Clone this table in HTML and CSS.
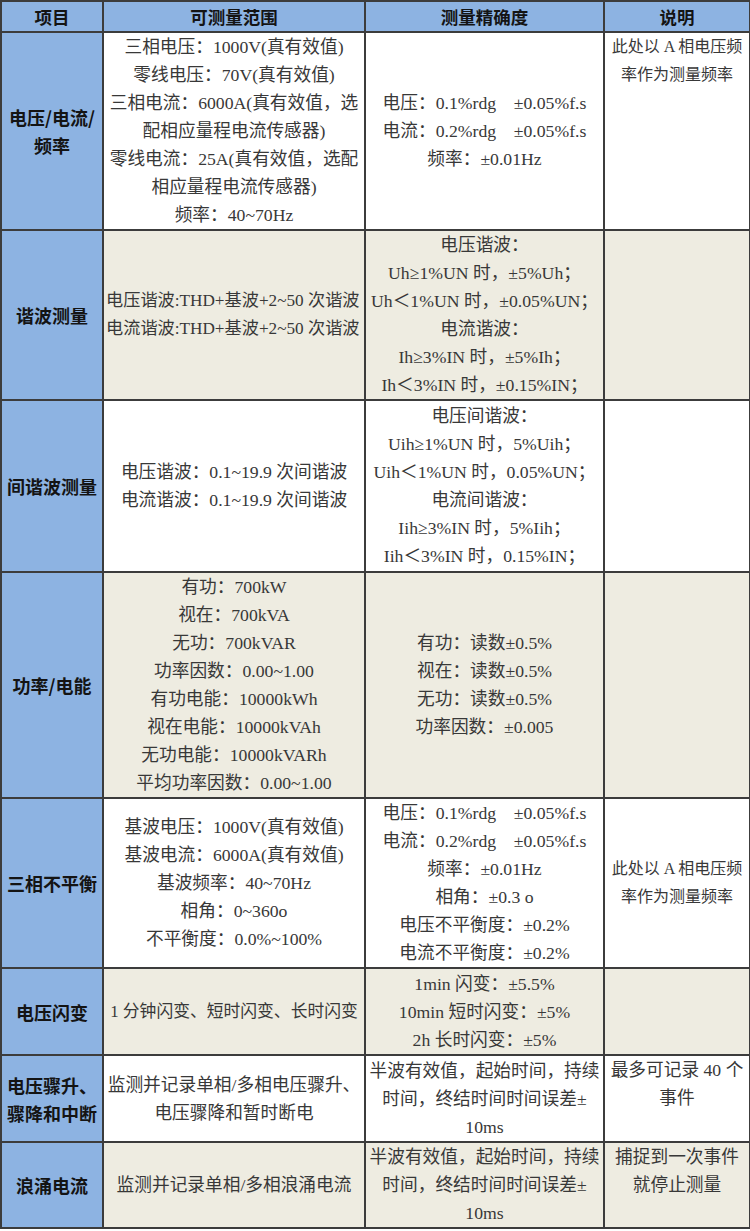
FILE: index.html
```html
<!DOCTYPE html>
<html lang="zh-CN">
<head>
<meta charset="utf-8">
<title>测量参数</title>
<link rel="stylesheet" href="styles.css">
</head>
<body>
<table class="spec">
  <colgroup>
    <col class="c1"><col class="c2"><col class="c3"><col class="c4">
  </colgroup>
  <thead>
    <tr><th>项目</th><th>可测量范围</th><th>测量精确度</th><th>说明</th></tr>
  </thead>
  <tbody>
    <tr>
      <td class="item">电压/电流/<br>频率</td>
      <td>三相电压：1000V(真有效值)<br>零线电压：70V(真有效值)<br>三相电流：6000A(真有效值，选<br>配相应量程电流传感器)<br>零线电流：25A(真有效值，选配<br>相应量程电流传感器)<br>频率：40~70Hz</td>
      <td>电压：0.1%rdg&nbsp;&nbsp;&nbsp;&nbsp;±0.05%f.s<br>电流：0.2%rdg&nbsp;&nbsp;&nbsp;&nbsp;±0.05%f.s<br>频率：±0.01Hz</td>
      <td class="top small">此处以 A 相电压频<br>率作为测量频率</td>
    </tr>
    <tr class="alt">
      <td class="item">谐波测量</td>
      <td class="snug">电压谐波:THD+基波+2~50 次谐波<br>电流谐波:THD+基波+2~50 次谐波</td>
      <td>电压谐波：<br>Uh≥1%UN 时，±5%Uh；<br>Uh＜1%UN 时，±0.05%UN；<br>电流谐波：<br>Ih≥3%IN 时，±5%Ih；<br>Ih＜3%IN 时，±0.15%IN；</td>
      <td></td>
    </tr>
    <tr class="tall">
      <td class="item">间谐波测量</td>
      <td>电压谐波：0.1~19.9 次间谐波<br>电流谐波：0.1~19.9 次间谐波</td>
      <td>电压间谐波：<br>Uih≥1%UN 时，5%Uih；<br>Uih＜1%UN 时，0.05%UN；<br>电流间谐波：<br>Iih≥3%IN 时，5%Iih；<br>Iih＜3%IN 时，0.15%IN；</td>
      <td></td>
    </tr>
    <tr class="alt">
      <td class="item">功率/电能</td>
      <td>有功：700kW<br>视在：700kVA<br>无功：700kVAR<br>功率因数：0.00~1.00<br>有功电能：10000kWh<br>视在电能：10000kVAh<br>无功电能：10000kVARh<br>平均功率因数：0.00~1.00</td>
      <td>有功：读数±0.5%<br>视在：读数±0.5%<br>无功：读数±0.5%<br>功率因数：±0.005</td>
      <td></td>
    </tr>
    <tr>
      <td class="item">三相不平衡</td>
      <td>基波电压：1000V(真有效值)<br>基波电流：6000A(真有效值)<br>基波频率：40~70Hz<br>相角：0~360o<br>不平衡度：0.0%~100%</td>
      <td>电压：0.1%rdg&nbsp;&nbsp;&nbsp;&nbsp;±0.05%f.s<br>电流：0.2%rdg&nbsp;&nbsp;&nbsp;&nbsp;±0.05%f.s<br>频率：±0.01Hz<br>相角：±0.3 o<br>电压不平衡度：±0.2%<br>电流不平衡度：±0.2%</td>
      <td class="small">此处以 A 相电压频<br>率作为测量频率</td>
    </tr>
    <tr class="alt short">
      <td class="item">电压闪变</td>
      <td class="fit">1 分钟闪变、短时闪变、长时闪变</td>
      <td>1min 闪变：±5.5%<br>10min 短时闪变：±5%<br>2h 长时闪变：±5%</td>
      <td></td>
    </tr>
    <tr class="short">
      <td class="item">电压骤升、<br>骤降和中断</td>
      <td>监测并记录单相/多相电压骤升、<br>电压骤降和暂时断电</td>
      <td>半波有效值，起始时间，持续<br>时间，终结时间时间误差±<br>10ms</td>
      <td class="top">最多可记录 40 个<br>事件</td>
    </tr>
    <tr class="alt">
      <td class="item">浪涌电流</td>
      <td>监测并记录单相/多相浪涌电流</td>
      <td>半波有效值，起始时间，持续<br>时间，终结时间时间误差±<br>10ms</td>
      <td class="top">捕捉到一次事件<br>就停止测量</td>
    </tr>
  </tbody>
</table>
</body>
</html>
```

FILE: styles.css
```css
html, body {
  margin: 0;
  padding: 0;
  background: #ffffff;
}

.spec {
  border-collapse: collapse;
  table-layout: fixed;
  width: 749px;
  font-family: "Liberation Serif", "Noto Sans CJK SC", serif;
  font-size: 17.7px;
  color: #383838;
}

.spec .c1 { width: 102px; }
.spec .c2 { width: 262px; }
.spec .c3 { width: 239px; }
.spec .c4 { width: 146px; }

.spec th,
.spec td {
  border: 2px solid #3c3c3c;
  padding: 0 1px;
  text-align: center;
  vertical-align: middle;
  line-height: 28px;
  white-space: nowrap;
  background: #ffffff;
}

.spec th {
  background: #8db3e2;
  font-family: "Noto Sans CJK SC", sans-serif;
  font-weight: 700;
  font-size: 17.5px;
  line-height: 29px;
  color: #141414;
}

.spec .alt td {
  background: #eeece1;
}

.spec td.item {
  background: #8db3e2;
  font-family: "Noto Sans CJK SC", sans-serif;
  font-weight: 700;
  font-size: 18px;
  color: #141414;
}

.spec .tall td {
  height: 170px;
}

.spec .short td {
  height: 85px;
}

.spec td.top {
  vertical-align: top;
}

.spec td.small {
  font-size: 16px;
}

.spec td.snug {
  font-size: 17.2px;
  padding: 0;
  text-align: left;
  padding-left: 2px;
}

.spec td.fit {
  font-size: 16.8px;
  padding: 0;
}
```
